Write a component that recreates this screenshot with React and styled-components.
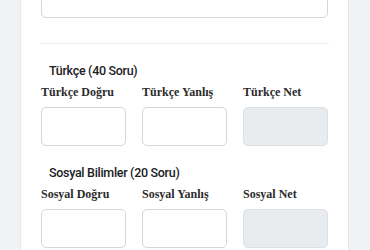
import React from "react"
import styled, { createGlobalStyle } from "styled-components"

const GlobalStyle = createGlobalStyle`
    html, body {
        margin: 0;
        padding: 0;
        background-color: #f1f2f4;
        overflow: hidden;
    }
`

const Page = styled.div`
    height: 250px;
    overflow: hidden;
`

const Card = styled.div`
    background-color: #fff;
    margin: -22px 21px 0 20px;
    border-left: 1px solid #e6e8eb;
    border-right: 1px solid #e6e8eb;
    padding: 0 20px 30px;
`

const Input = styled.div`
    height: ${props => props.tall ? "38px" : "37px"};
    border: 1px solid ${props => props.disabled ? "#dcdfe3" : "#d3d7dc"};
    border-radius: 5px;
    background-color: ${props => props.disabled ? "#e9ecef" : "#fff"};
    box-sizing: content-box;
`

const Divider = styled.hr`
    border: none;
    border-top: 1px solid #eceef0;
    margin: 25px -1px 0;
`

const Section = styled.section`
    padding-top: 19px;
`

const Heading = styled.h5`
    font-family: Roboto, Inter, sans-serif;
    font-size: 12.5px;
    font-weight: 500;
    line-height: 16px;
    letter-spacing: -0.3px;
    color: #202124;
    margin: 0 0 5px 8px;
`

const Row = styled.div`
    display: grid;
    grid-template-columns: repeat(3, 1fr);
    column-gap: 16px;
`

const Field = styled.div`
    display: flex;
    flex-direction: column;
`

const Label = styled.label`
    font-family: "Liberation Serif", serif;
    font-size: 12px;
    font-weight: bold;
    line-height: 16px;
    color: #2b2b2b;
    margin-bottom: 7px;
    white-space: nowrap;
`

const subjects = [
    { title: "Türkçe (40 Soru)", name: "Türkçe" },
    { title: "Sosyal Bilimler (20 Soru)", name: "Sosyal" },
]

const App = () => {
    return <>
        <GlobalStyle />
        <Page>
            <Card>
                <Input tall />
                <Divider />
                {subjects.map(s => (
                    <Section key={s.name}>
                        <Heading>{s.title}</Heading>
                        <Row>
                            <Field>
                                <Label>{s.name} Doğru</Label>
                                <Input />
                            </Field>
                            <Field>
                                <Label>{s.name} Yanlış</Label>
                                <Input />
                            </Field>
                            <Field>
                                <Label>{s.name} Net</Label>
                                <Input disabled />
                            </Field>
                        </Row>
                    </Section>
                ))}
            </Card>
        </Page>
    </>
}

export default App
